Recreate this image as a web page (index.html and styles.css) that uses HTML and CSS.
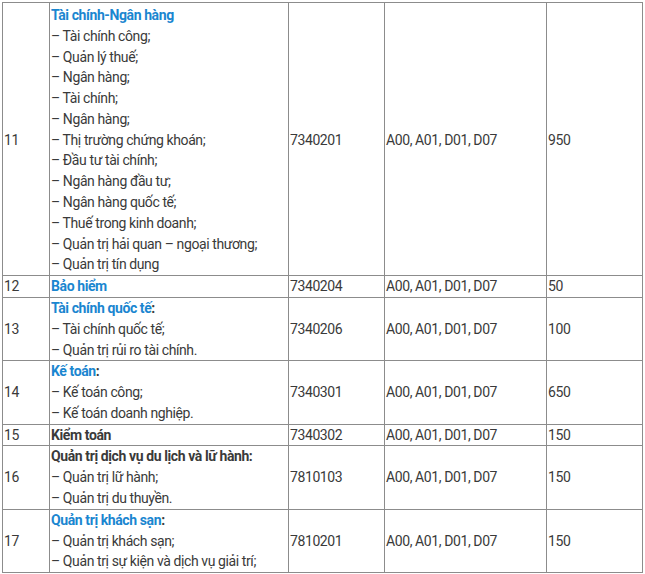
FILE: index.html
```html
<!DOCTYPE html>
<html lang="vi">
<head>
<meta charset="utf-8">
<link rel="stylesheet" href="styles.css">
</head>
<body>
<table class="majors">
  <colgroup>
    <col class="c-no"><col class="c-name"><col class="c-code"><col class="c-group"><col class="c-quota">
  </colgroup>
  <tbody>
    <tr class="first">
      <td class="mid">11</td>
      <td><a class="link" href="#">Tài chính-Ngân hàng</a><br>– Tài chính công;<br>– Quản lý thuế;<br>– Ngân hàng;<br>– Tài chính;<br>– Ngân hàng;<br>– Thị trường chứng khoán;<br>– Đầu tư tài chính;<br>– Ngân hàng đầu tư;<br>– Ngân hàng quốc tế;<br>– Thuế trong kinh doanh;<br>– Quản trị hải quan – ngoại thương;<br>– Quản trị tín dụng</td>
      <td class="mid">7340201</td>
      <td class="mid">A00, A01, D01, D07</td>
      <td class="mid">950</td>
    </tr>
    <tr>
      <td class="mid">12</td>
      <td><a class="link" href="#">Bảo hiểm</a></td>
      <td class="mid">7340204</td>
      <td class="mid">A00, A01, D01, D07</td>
      <td class="mid">50</td>
    </tr>
    <tr>
      <td class="mid">13</td>
      <td><a class="link" href="#">Tài chính quốc tế</a><b>:</b><br>– Tài chính quốc tế;<br>– Quản trị rủi ro tài chính.</td>
      <td class="mid">7340206</td>
      <td class="mid">A00, A01, D01, D07</td>
      <td class="mid">100</td>
    </tr>
    <tr>
      <td class="mid">14</td>
      <td><a class="link" href="#">Kế toán</a><b>:</b><br>– Kế toán công;<br>– Kế toán doanh nghiệp.</td>
      <td class="mid">7340301</td>
      <td class="mid">A00, A01, D01, D07</td>
      <td class="mid">650</td>
    </tr>
    <tr>
      <td class="mid">15</td>
      <td><b>Kiểm toán</b></td>
      <td class="mid">7340302</td>
      <td class="mid">A00, A01, D01, D07</td>
      <td class="mid">150</td>
    </tr>
    <tr>
      <td class="mid">16</td>
      <td><b>Quản trị dịch vụ du lịch và lữ hành:</b><br>– Quản trị lữ hành;<br>– Quản trị du thuyền.</td>
      <td class="mid">7810103</td>
      <td class="mid">A00, A01, D01, D07</td>
      <td class="mid">150</td>
    </tr>
    <tr>
      <td class="mid">17</td>
      <td><a class="link" href="#">Quản trị khách sạn</a><b>:</b><br>– Quản trị khách sạn;<br>– Quản trị sự kiện và dịch vụ giải trí;</td>
      <td class="mid">7810201</td>
      <td class="mid">A00, A01, D01, D07</td>
      <td class="mid">150</td>
    </tr>
  </tbody>
</table>
</body>
</html>
```

FILE: styles.css
```css
html, body {
  margin: 0;
  padding: 0;
  background: #fff;
}

body {
  padding: 2px 0 0 2px;
  font-family: Roboto, "Liberation Sans", sans-serif;
  font-size: 14px;
  letter-spacing: -0.4px;
  line-height: 20.78px;
  color: #3a3a3a;
}

.majors {
  border-collapse: collapse;
  table-layout: fixed;
  width: 640px;
}

.c-no { width: 47px; }
.c-name { width: 239px; }
.c-code { width: 96px; }
.c-group { width: 162px; }
.c-quota { width: 96px; }

.majors td {
  border: 1px solid #8c8c8c;
  padding: 0 1px;
  vertical-align: top;
  white-space: nowrap;
  overflow: hidden;
}

.majors .first td {
  padding-top: 2px;
}

.majors td.mid {
  vertical-align: middle;
}

.link {
  color: #1a86d0;
  font-weight: 700;
  text-decoration: none;
}

b {
  font-weight: 700;
  color: #3a3a3a;
}
```
